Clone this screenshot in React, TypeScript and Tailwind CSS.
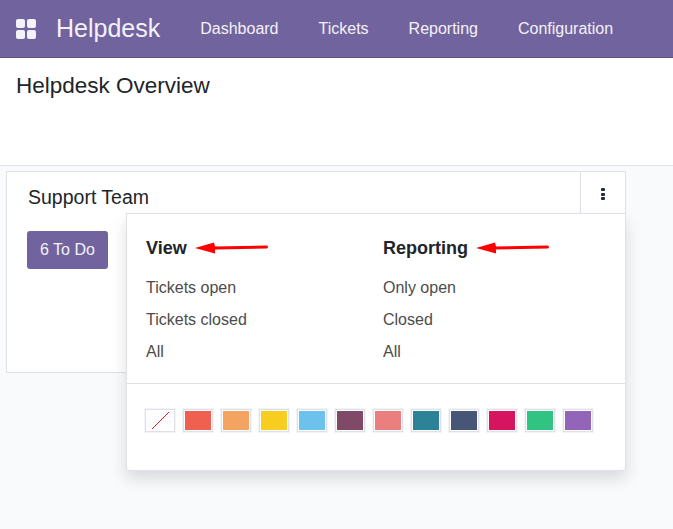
import React from "react";

const navItems = ["Dashboard", "Tickets", "Reporting", "Configuration"];
const viewLinks = ["Tickets open", "Tickets closed", "All"];
const reportLinks = ["Only open", "Closed", "All"];
const colors = [
  "bg-[#f06050]",
  "bg-[#f4a460]",
  "bg-[#f7cd1f]",
  "bg-[#6cc1ed]",
  "bg-[#814968]",
  "bg-[#eb7e7f]",
  "bg-[#2c8397]",
  "bg-[#475577]",
  "bg-[#d6145f]",
  "bg-[#30c381]",
  "bg-[#9365b8]",
];

function Arrow() {
  return (
    <svg width="74" height="14" viewBox="0 0 74 14" className="block">
      <path d="M0 7 L19 1.5 L20 5.5 L72 4.5 Q74 6 72 7.5 L20 8.5 L20 12.5 Z" fill="#fe0000" />
    </svg>
  );
}

function LinkColumn({ title, links, width }: { title: string; links: string[]; width: string }) {
  return (
    <div className={width}>
      <div className="flex items-center gap-[8px] h-[24px]">
        <span className="text-[18px] font-bold text-[#212529]">{title}</span>
        <Arrow />
      </div>
      <div className="mt-[12px] flex flex-col">
        {links.map((l) => (
          <div key={l} className="h-[32px] leading-[32px] text-[16px] text-[#4c4c4c]">
            {l}
          </div>
        ))}
      </div>
    </div>
  );
}

export default function App() {
  return (
    <div className="h-[529px] w-[673px] overflow-hidden flex flex-col bg-[#f9fafb] font-['Liberation_Sans',Arial,sans-serif]">
      <header className="h-[58px] shrink-0 bg-[#71639e] border-b border-[#5f5383] flex items-center text-[#f4f2f8]">
        <div className="ml-[16px] grid grid-cols-2 gap-[2px] w-[20px]">
          <span className="h-[9px] bg-[#f4f2f8] rounded-[2px]" />
          <span className="h-[9px] bg-[#f4f2f8] rounded-[2px]" />
          <span className="h-[9px] bg-[#f4f2f8] rounded-[2px]" />
          <span className="h-[9px] bg-[#f4f2f8] rounded-[2px]" />
        </div>
        <span className="ml-[20px] text-[25px]">Helpdesk</span>
        <nav className="ml-[40px] flex gap-[40px] text-[16px]">
          {navItems.map((n) => (
            <span key={n}>{n}</span>
          ))}
        </nav>
      </header>

      <div className="h-[108px] shrink-0 bg-white border-b border-[#dee2e6] pl-[16px] pt-[13px]">
        <h1 className="text-[22.5px] leading-[30px] text-[#212529]">Helpdesk Overview</h1>
      </div>

      <main className="flex-1 pl-[6px] pt-[5px]">
        <div className="relative w-[620px] h-[202px] bg-white border border-[#dee2e6]">
          <div className="pl-[21px] pt-[12px] text-[19.5px] leading-[26px] text-[#212529]">Support Team</div>
          <button className="mt-[21px] ml-[20px] w-[81px] h-[38px] rounded-[3px] bg-[#71639e] text-[16px] text-[#f4f2f8]">
            6 To Do
          </button>

          <div className="absolute right-0 top-0 w-[45px] h-[42px] bg-white border-l border-b border-[#dee2e6] flex flex-col items-center gap-[1.5px] pt-[16px]">
            <span className="w-[3.5px] h-[3px] bg-[#212d3f] rounded-[1px]" />
            <span className="w-[3.5px] h-[3px] bg-[#212d3f] rounded-[1px]" />
            <span className="w-[3.5px] h-[3px] bg-[#212d3f] rounded-[1px]" />
          </div>

          <div className="absolute left-[119px] top-[41px] w-[500px] h-[258px] bg-white border border-[#dee2e6] rounded-b-[3px] shadow-[0_8px_16px_rgba(0,0,0,0.13)]">
            <div className="flex pl-[19px] pt-[22px] h-[170px] border-b border-[#dee2e6]">
              <LinkColumn title="View" links={viewLinks} width="w-[237px]" />
              <LinkColumn title="Reporting" links={reportLinks} width="w-[220px]" />
            </div>
            <div className="flex gap-[8px] pl-[18px] pt-[25px]">
              <span className="relative w-[30px] h-[23px] bg-white border border-[#dee2e6] outline outline-[#f3f4f7]">
                <svg width="28" height="21" viewBox="0 0 28 21" className="absolute inset-0">
                  <line x1="6" y1="19" x2="23" y2="2" stroke="#ee1c25" strokeWidth="1" />
                </svg>
              </span>
              {colors.map((c) => (
                <span
                  key={c}
                  className="w-[30px] h-[23px] bg-white border border-[#dee2e6] outline outline-[#f3f4f7] p-[1px]"
                >
                  <span className={`block w-full h-full ${c}`} />
                </span>
              ))}
            </div>
          </div>
        </div>
      </main>
    </div>
  );
}
